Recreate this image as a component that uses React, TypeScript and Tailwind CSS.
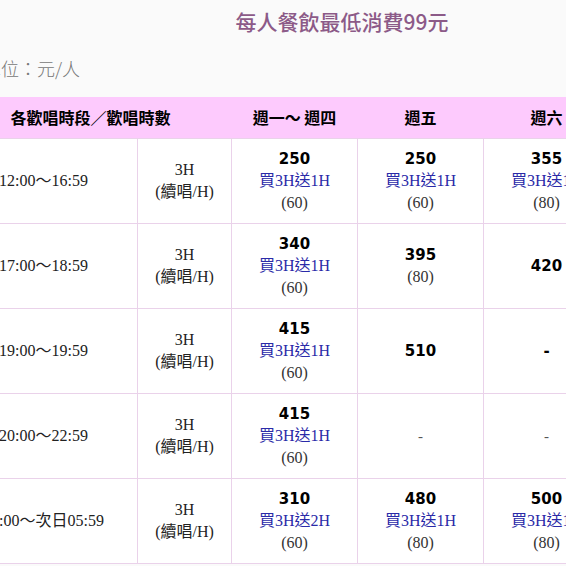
import React from "react";

type Cell = { price?: string; promo?: string; note?: string; dash?: "bold" | "light" };

const rows: { time: string; cells: Cell[] }[] = [
  {
    time: "12:00～16:59",
    cells: [
      { price: "250", promo: "買3H送1H", note: "(60)" },
      { price: "250", promo: "買3H送1H", note: "(60)" },
      { price: "355", promo: "買3H送1H", note: "(80)" },
      { price: "355", promo: "買3H送1H", note: "(80)" },
    ],
  },
  {
    time: "17:00～18:59",
    cells: [
      { price: "340", promo: "買3H送1H", note: "(60)" },
      { price: "395", note: "(80)" },
      { price: "420" },
      { price: "420" },
    ],
  },
  {
    time: "19:00～19:59",
    cells: [
      { price: "415", promo: "買3H送1H", note: "(60)" },
      { price: "510" },
      { dash: "bold" },
      { dash: "bold" },
    ],
  },
  {
    time: "20:00～22:59",
    cells: [
      { price: "415", promo: "買3H送1H", note: "(60)" },
      { dash: "light" },
      { dash: "light" },
      { dash: "light" },
    ],
  },
  {
    time: "23:00～次日05:59",
    cells: [
      { price: "310", promo: "買3H送2H", note: "(60)" },
      { price: "480", promo: "買3H送1H", note: "(80)" },
      { price: "500", promo: "買3H送1H", note: "(80)" },
      { price: "500", promo: "買3H送1H", note: "(80)" },
    ],
  },
];

const serif = "font-['Liberation_Serif','Noto_Sans_CJK_TC',serif]";
const sans = "font-['Noto_Sans_CJK_TC','Liberation_Sans',sans-serif]";

function PriceCell({ c }: { c: Cell }) {
  return (
    <td className="border border-[#ead2ea] bg-white text-center align-middle p-0">
      <div className="flex flex-col items-center justify-center leading-[22px]">
        {c.price && (
          <span className="font-['DejaVu_Sans',sans-serif] font-bold text-[15px] text-black">{c.price}</span>
        )}
        {c.promo && <span className={`${serif} text-[16px] text-[#2a2aa8]`}>{c.promo}</span>}
        {c.note && <span className={`${serif} text-[16px] text-[#333]`}>{c.note}</span>}
        {c.dash === "bold" && (
          <span className="font-['DejaVu_Sans',sans-serif] font-bold text-[15px] text-black">-</span>
        )}
        {c.dash === "light" && <span className={`${serif} text-[15px] text-[#555]`}>-</span>}
      </div>
    </td>
  );
}

export default function App() {
  return (
    <div className="w-[566px] h-[566px] overflow-hidden bg-[#fafafa]">
      <div className="ml-[-51px] w-[786px]">
        <div className={`h-[44px] flex items-center justify-center ${sans} font-medium text-[21px] text-[#8c5a88]`}>
          每人餐飲最低消費99元
        </div>
        <div className={`h-[48px] flex items-center pl-[34px] ${sans} font-light text-[18px] text-[#777]`}>
          單位：元/人
        </div>
        <table className="mt-[5px] w-[786px] table-fixed border-collapse">
          <colgroup>
            <col className="w-[188px]" />
            <col className="w-[94px]" />
            <col className="w-[126px]" />
            <col className="w-[126px]" />
            <col className="w-[126px]" />
            <col className="w-[126px]" />
          </colgroup>
          <thead>
            <tr className={`h-[41px] bg-[#fdcafd] ${sans} font-bold text-[16px] text-black`}>
              <th colSpan={2} className="text-center font-bold">各歡唱時段／歡唱時數</th>
              <th className="text-center font-bold">週一～ 週四</th>
              <th className="text-center font-bold">週五</th>
              <th className="text-center font-bold">週六</th>
              <th className="text-center font-bold">週日</th>
            </tr>
          </thead>
          <tbody>
            {rows.map((r) => (
              <tr key={r.time} className="h-[85px]">
                <td className={`border border-[#ead2ea] bg-white text-center align-middle ${serif} text-[16px] text-[#222]`}>
                  {r.time}
                </td>
                <td className={`border border-[#ead2ea] bg-white text-center align-middle ${serif} text-[16px] text-[#222] leading-[22px]`}>
                  <div>3H</div>
                  <div>(續唱/H)</div>
                </td>
                {r.cells.map((c, i) => (
                  <PriceCell key={i} c={c} />
                ))}
              </tr>
            ))}
          </tbody>
        </table>
      </div>
    </div>
  );
}
